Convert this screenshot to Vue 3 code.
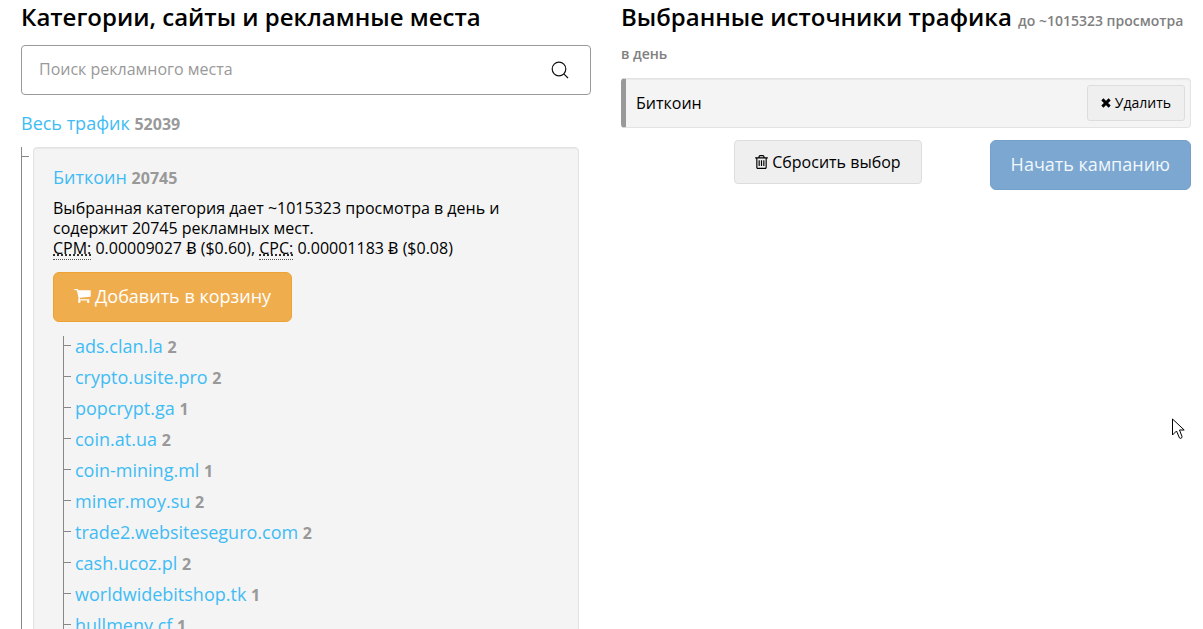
<script setup>
import { ref } from 'vue'

const query = ref('')

const sites = [
  { name: 'ads.clan.la', count: 2 },
  { name: 'crypto.usite.pro', count: 2 },
  { name: 'popcrypt.ga', count: 1 },
  { name: 'coin.at.ua', count: 2 },
  { name: 'coin-mining.ml', count: 1 },
  { name: 'miner.moy.su', count: 2 },
  { name: 'trade2.websiteseguro.com', count: 2 },
  { name: 'cash.ucoz.pl', count: 2 },
  { name: 'worldwidebitshop.tk', count: 1 },
  { name: 'hullmeny.cf', count: 1 },
]
</script>

<template>
  <main class="page">
    <section class="column">
      <h3 class="heading">Категории, сайты и рекламные места</h3>
      <form class="search" role="search" @submit.prevent>
        <input v-model="query" class="search-input" type="text" aria-label="Поиск рекламного места" placeholder="Поиск рекламного места" />
        <button class="search-button" type="submit" aria-label="Найти">
          <svg width="18" height="18" viewBox="0 0 18 18" fill="none" stroke="#111" stroke-width="1.2">
            <circle cx="8" cy="8" r="6.8" />
            <path d="M12.8 12.8 17 17" />
          </svg>
        </button>
      </form>

      <div class="root-category"><a href="#">Весь трафик</a> <b>52039</b></div>

      <ul class="tree">
        <li class="branch">
          <div class="well">
            <div class="category"><a href="#">Биткоин</a> <b>20745</b></div>
            <p class="summary">
              Выбранная категория дает ~1015323 просмотра в день и содержит 20745 рекламных мест.<br />
              <abbr>CPM:</abbr> 0.00009027 Ƀ ($0.60), <abbr>CPC:</abbr> 0.00001183 Ƀ ($0.08)
            </p>
            <button class="btn btn-cart" type="button">
              <svg width="17" height="14" viewBox="0 256 1664 1408" fill="#fff">
                <path d="M640 1536q0 52-38 90t-90 38-90-38-38-90 38-90 90-38 90 38 38 90zm896 0q0 52-38 90t-90 38-90-38-38-90 38-90 90-38 90 38 38 90zm128-1088v512q0 24-16.5 42.5t-40.500 21.500l-1044 122q13 60 13 70 0 16-24 64h920q26 0 45 19t19 45-19 45-45 19h-1024q-26 0-45-19t-19-45q0-11 8-31.500t16-36 21.500-40 15.500-29.500l-177-823h-204q-26 0-45-19t-19-45 19-45 45-19h256q16 0 28.500 6.500t19.500 15.500 13 24.500 8 26 5.500 29.500 4.500 26h1201q26 0 45 19t19 45z" />
              </svg>
              <span>Добавить в корзину</span>
            </button>
            <ul class="tree">
              <li v-for="site in sites" :key="site.name" class="leaf">
                <a href="#">{{ site.name }}</a> <b>{{ site.count }}</b>
              </li>
            </ul>
          </div>
        </li>
      </ul>
    </section>

    <section class="column">
      <h3 class="heading">Выбранные источники трафика <small>до ~1015323 просмотра в день</small></h3>
      <div class="selected">
        <span>Биткоин</span>
        <button class="btn btn-small" type="button">
          <svg width="10" height="10" viewBox="0 0 11 11" stroke="#000" stroke-width="3.2">
            <path d="M1.500 1.500 9.500 9.500M9.500 1.500 1.500 9.500" />
          </svg>
          <span>Удалить</span>
        </button>
      </div>
      <div class="actions">
        <button class="btn btn-default" type="button">
          <svg width="13" height="14" viewBox="192 128 1408 1536" fill="#000">
            <path d="M704 736v576q0 14-9 23t-23 9h-64q-14 0-23-9t-9-23v-576q0-14 9-23t23-9h64q14 0 23 9t9 23zm256 0v576q0 14-9 23t-23 9h-64q-14 0-23-9t-9-23v-576q0-14 9-23t23-9h64q14 0 23 9t9 23zm256 0v576q0 14-9 23t-23 9h-64q-14 0-23-9t-9-23v-576q0-14 9-23t23-9h64q14 0 23 9t9 23zm128 724v-948h-896v948q0 22 7 40.500t14.500 27 10.500 8.500h832q3 0 10.500-8.500t14.500-27 7-40.500zm-672-1076h448l-48-117q-7-9-17-11h-317q-10 2-17 11zm928 32v64q0 14-9 23t-23 9h-96v948q0 83-47 143.500t-113 60.500h-832q-66 0-113-58.500t-47-141.500v-952h-96q-14 0-23-9t-9-23v-64q0-14 9-23t23-9h309l70-167q15-37 54-63t79-26h320q40 0 79 26t54 63l70 167h309q14 0 23 9t9 23z" />
          </svg>
          <span>Сбросить выбор</span>
        </button>
        <button class="btn btn-primary" type="button">Начать кампанию</button>
      </div>
    </section>

    <svg class="cursor" width="13" height="22" viewBox="0 0 13 22" fill="#fff" stroke="#000" aria-hidden="true">
      <path d="M.5 1v16l4-4 3 7q1 1 2.500-.5v-1L7.500 12h4.700z" />
    </svg>
  </main>
</template>

<style>
html,
body {
  margin: 0;
  background: #fff;
}
</style>

<style scoped>
.page {
  position: relative;
  box-sizing: border-box;
  height: 100vh;
  overflow: hidden;
  display: grid;
  grid-template-columns: 1fr 1fr;
  align-items: start;
  gap: 30px;
  padding: 0 12px 0 21px;
  font-family: 'Open Sans', 'Noto Sans', sans-serif;
  font-size: 16px;
  font-weight: 400;
  line-height: 20px;
  color: #000;
}

.heading {
  margin: 0;
  font-size: 24px;
  font-weight: 600;
  line-height: 33px;
}

.heading small {
  font-size: 14px;
  line-height: 14px;
  color: #808080;
}

a {
  color: #40bcf4;
  text-decoration: none;
}

b {
  font-size: 16px;
  font-weight: 700;
  line-height: 16px;
  color: #999;
}

.search {
  display: flex;
  box-sizing: border-box;
  height: 50px;
  margin-top: 12px;
  border: 1px solid #999;
  border-radius: 4px;
}

.search-input {
  flex: 1;
  min-width: 0;
  padding: 0 17px 2px;
  border: 0;
  outline: 0;
  background: none;
  font: inherit;
  color: inherit;
}

.search-input::placeholder {
  color: #999;
  opacity: 1;
}

.search-button {
  display: flex;
  align-items: center;
  padding: 0 21px;
  border: 0;
  background: none;
}

.root-category {
  margin: 15px 0 10px;
  font-size: 18px;
  line-height: 27px;
}

.tree {
  margin: 0;
  padding: 0;
  list-style: none;
}

.branch,
.leaf {
  position: relative;
  border-left: 1px solid #888;
}

.branch {
  padding: 0 12px 0 11px;
}

.branch::before,
.leaf::before {
  content: '';
  position: absolute;
  left: 0;
  top: 9px;
  width: 7px;
  border-top: 1px solid #888;
}

.well {
  padding: 16px 19px 19px;
  border: 1px solid #e3e3e3;
  border-radius: 4px;
  background: #f4f4f4;
  box-shadow: inset 0 1px 1px rgba(0, 0, 0, 0.05);
}

.category {
  font-size: 18px;
  line-height: 27px;
}

.summary {
  margin: 7px 0 14px;
}

abbr {
  text-decoration: underline dotted;
  border-bottom: 1px dotted #555;
}

.btn {
  display: inline-flex;
  align-items: center;
  box-sizing: border-box;
  gap: 4px;
  border: 1px solid #ddd;
  border-radius: 4px;
  background: #efefef;
  font: inherit;
  color: #000;
  white-space: nowrap;
}

.btn-cart {
  display: flex;
  height: 50px;
  padding: 0 20px 2px;
  margin-bottom: 14px;
  border-color: #eea236;
  border-radius: 6px;
  background: #f0ad4e;
  font-size: 18px;
  color: #fff;
}

.leaf {
  margin-left: 10px;
  padding: 0 0 11px 11px;
  font-size: 18px;
  line-height: 20px;
}

.selected {
  display: flex;
  align-items: center;
  justify-content: space-between;
  box-sizing: border-box;
  height: 50px;
  margin: 12px 0;
  padding: 0 5px 0 10px;
  border: 1px solid #e3e3e3;
  border-left: 5px solid #999;
  border-radius: 4px;
  background: #f4f4f4;
  box-shadow: inset 0 1px 1px rgba(0, 0, 0, 0.05);
}

.btn-small {
  height: 36px;
  padding: 0 13px;
  border-radius: 3px;
  font-size: 14px;
}

.actions {
  display: flex;
  align-items: flex-start;
  justify-content: flex-end;
  gap: 68px;
}

.btn-default {
  height: 44px;
  padding: 0 20px;
}

.btn-primary {
  height: 50px;
  padding: 0 20px 2px;
  border-color: #72a0cb;
  border-radius: 6px;
  background: #7ba7d1;
  font-size: 18px;
  color: #f2f7fb;
}

.cursor {
  position: absolute;
  left: 1172px;
  top: 418px;
}
</style>
